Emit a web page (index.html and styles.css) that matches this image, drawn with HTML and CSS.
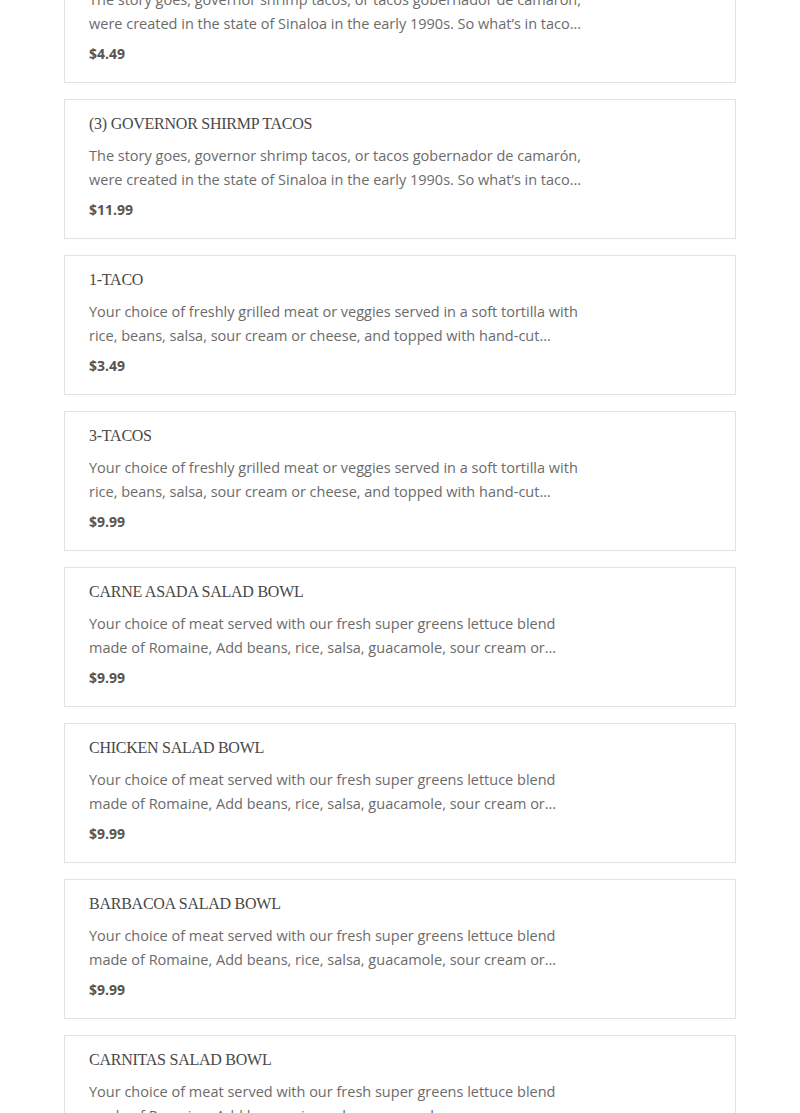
FILE: index.html
```html
<!DOCTYPE html>
<html lang="en">
<head>
<meta charset="utf-8">
<title>Menu</title>
<link rel="stylesheet" href="styles.css">
</head>
<body>
<main class="menu">
  <article class="item">
    <h3 class="item-title">GOVERNOR SHRIMP TACO</h3>
    <p class="item-desc">The story goes, governor shrimp tacos, or tacos gobernador de camarón, were created in the state of Sinaloa in the early 1990s. So what’s in taco…</p>
    <div class="item-price">$4.49</div>
  </article>
  <article class="item">
    <h3 class="item-title">(3) GOVERNOR SHIRMP TACOS</h3>
    <p class="item-desc">The story goes, governor shrimp tacos, or tacos gobernador de camarón, were created in the state of Sinaloa in the early 1990s. So what’s in taco…</p>
    <div class="item-price">$11.99</div>
  </article>
  <article class="item">
    <h3 class="item-title">1-TACO</h3>
    <p class="item-desc">Your choice of freshly grilled meat or veggies served in a soft tortilla with rice, beans, salsa, sour cream or cheese, and topped with hand-cut…</p>
    <div class="item-price">$3.49</div>
  </article>
  <article class="item">
    <h3 class="item-title">3-TACOS</h3>
    <p class="item-desc">Your choice of freshly grilled meat or veggies served in a soft tortilla with rice, beans, salsa, sour cream or cheese, and topped with hand-cut…</p>
    <div class="item-price">$9.99</div>
  </article>
  <article class="item">
    <h3 class="item-title">CARNE ASADA SALAD BOWL</h3>
    <p class="item-desc">Your choice of meat served with our fresh super greens lettuce blend made of Romaine, Add beans, rice, salsa, guacamole, sour cream or…</p>
    <div class="item-price">$9.99</div>
  </article>
  <article class="item">
    <h3 class="item-title">CHICKEN SALAD BOWL</h3>
    <p class="item-desc">Your choice of meat served with our fresh super greens lettuce blend made of Romaine, Add beans, rice, salsa, guacamole, sour cream or…</p>
    <div class="item-price">$9.99</div>
  </article>
  <article class="item">
    <h3 class="item-title">BARBACOA SALAD BOWL</h3>
    <p class="item-desc">Your choice of meat served with our fresh super greens lettuce blend made of Romaine, Add beans, rice, salsa, guacamole, sour cream or…</p>
    <div class="item-price">$9.99</div>
  </article>
  <article class="item">
    <h3 class="item-title">CARNITAS SALAD BOWL</h3>
    <p class="item-desc">Your choice of meat served with our fresh super greens lettuce blend made of Romaine, Add beans, rice, salsa, guacamole, sour cream or…</p>
    <div class="item-price">$9.99</div>
  </article>
</main>
</body>
</html>
```

FILE: styles.css
```css
html, body {
  margin: 0;
  padding: 0;
  background: #ffffff;
}

.menu {
  display: flex;
  flex-direction: column;
  gap: 16px;
  width: 672px;
  margin: -57px auto 0;
}

.item {
  border: 1px solid #e2e2e2;
  padding: 14px 24px 18px;
  display: flex;
  flex-direction: column;
  background: #fff;
}

.item-title {
  margin: 0;
  font-family: "Liberation Serif", "DejaVu Serif", serif;
  font-weight: 400;
  font-size: 16px;
  line-height: 20px;
  color: #484848;
  letter-spacing: -0.25px;
}

.item-desc {
  margin: 10px 0 0;
  max-width: 498px;
  font-family: "Open Sans", "Liberation Sans", sans-serif;
  font-size: 14.5px;
  line-height: 23.5px;
  color: #6b6b6b;
}

.item-price {
  margin-top: 9px;
  font-family: "Open Sans", "Liberation Sans", sans-serif;
  font-weight: 700;
  font-size: 14px;
  line-height: 20px;
  color: #555555;
}
```
